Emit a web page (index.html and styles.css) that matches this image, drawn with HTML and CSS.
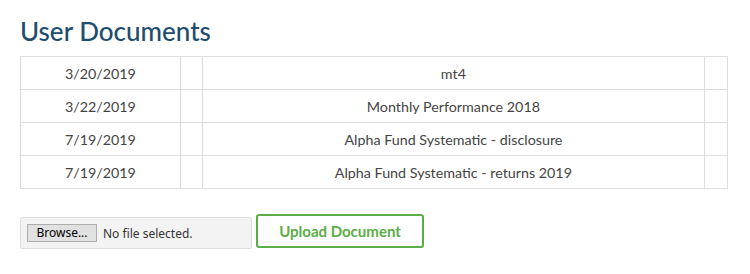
FILE: index.html
```html
<!DOCTYPE html>
<html>
<head>
<meta charset="utf-8">
<link rel="stylesheet" href="styles.css">
</head>
<body>
<div class="page">
  <h2 class="title">User Documents</h2>
  <table class="docs">
    <tr><td class="c-date">3/20/2019</td><td class="c-gap"></td><td class="c-name">mt4</td><td class="c-end"></td></tr>
    <tr><td class="c-date">3/22/2019</td><td class="c-gap"></td><td class="c-name">Monthly Performance 2018</td><td class="c-end"></td></tr>
    <tr><td class="c-date">7/19/2019</td><td class="c-gap"></td><td class="c-name">Alpha Fund Systematic - disclosure</td><td class="c-end"></td></tr>
    <tr><td class="c-date">7/19/2019</td><td class="c-gap"></td><td class="c-name">Alpha Fund Systematic - returns 2019</td><td class="c-end"></td></tr>
  </table>
  <div class="upload-row">
    <div class="file-box">
      <span class="browse">Browse...</span>
      <span class="file-status">No file selected.</span>
    </div>
    <button class="upload-btn">Upload Document</button>
  </div>
</div>
</body>
</html>
```
FILE: styles.css
```css
html, body {
  margin: 0;
  padding: 0;
  background: #ffffff;
}
.page {
  padding: 0 20px;
  font-family: Lato, "Open Sans", sans-serif;
}
.title {
  margin: 0;
  padding-top: 16px;
  height: 56px;
  box-sizing: border-box;
  font-size: 26px;
  line-height: 30px;
  font-weight: 500;
  color: #1f4d6e;
}
.docs {
  width: 708px;
  border-collapse: collapse;
  border: 1px solid #dddddd;
}
.docs td {
  border: 1px solid #dddddd;
  height: 32px;
  padding: 0;
  text-align: center;
  font-size: 14.3px;
  color: #444444;
}
.c-date { width: 159px; }
.c-gap { width: 21px; }
.c-name { width: 502px; }
.c-end { width: 22px; }
.upload-row {
  display: flex;
  align-items: center;
  gap: 4px;
  margin-top: 24px;
}
.file-box {
  box-sizing: border-box;
  width: 232px;
  height: 32px;
  margin-top: 4px;
  background: #f3f3f3;
  border: 1px solid #dddddd;
  border-radius: 2px;
  display: flex;
  align-items: center;
  padding-left: 6px;
  font-family: "Noto Sans", sans-serif;
  font-size: 12px;
  color: #333;
}
.browse {
  box-sizing: border-box;
  width: 70px;
  height: 18px;
  line-height: 16px;
  text-align: center;
  background: #e1e1e1;
  border: 1px solid #adadad;
  color: #000;
}
.file-status {
  margin-left: 6px;
  color: #333;
}
.upload-btn {
  box-sizing: border-box;
  width: 168px;
  height: 34px;
  background: #ffffff;
  border: 2px solid #5bad46;
  border-radius: 3px;
  color: #5bad46;
  font-family: Lato, sans-serif;
  font-weight: 700;
  font-size: 15px;
  padding: 0;
}
```
